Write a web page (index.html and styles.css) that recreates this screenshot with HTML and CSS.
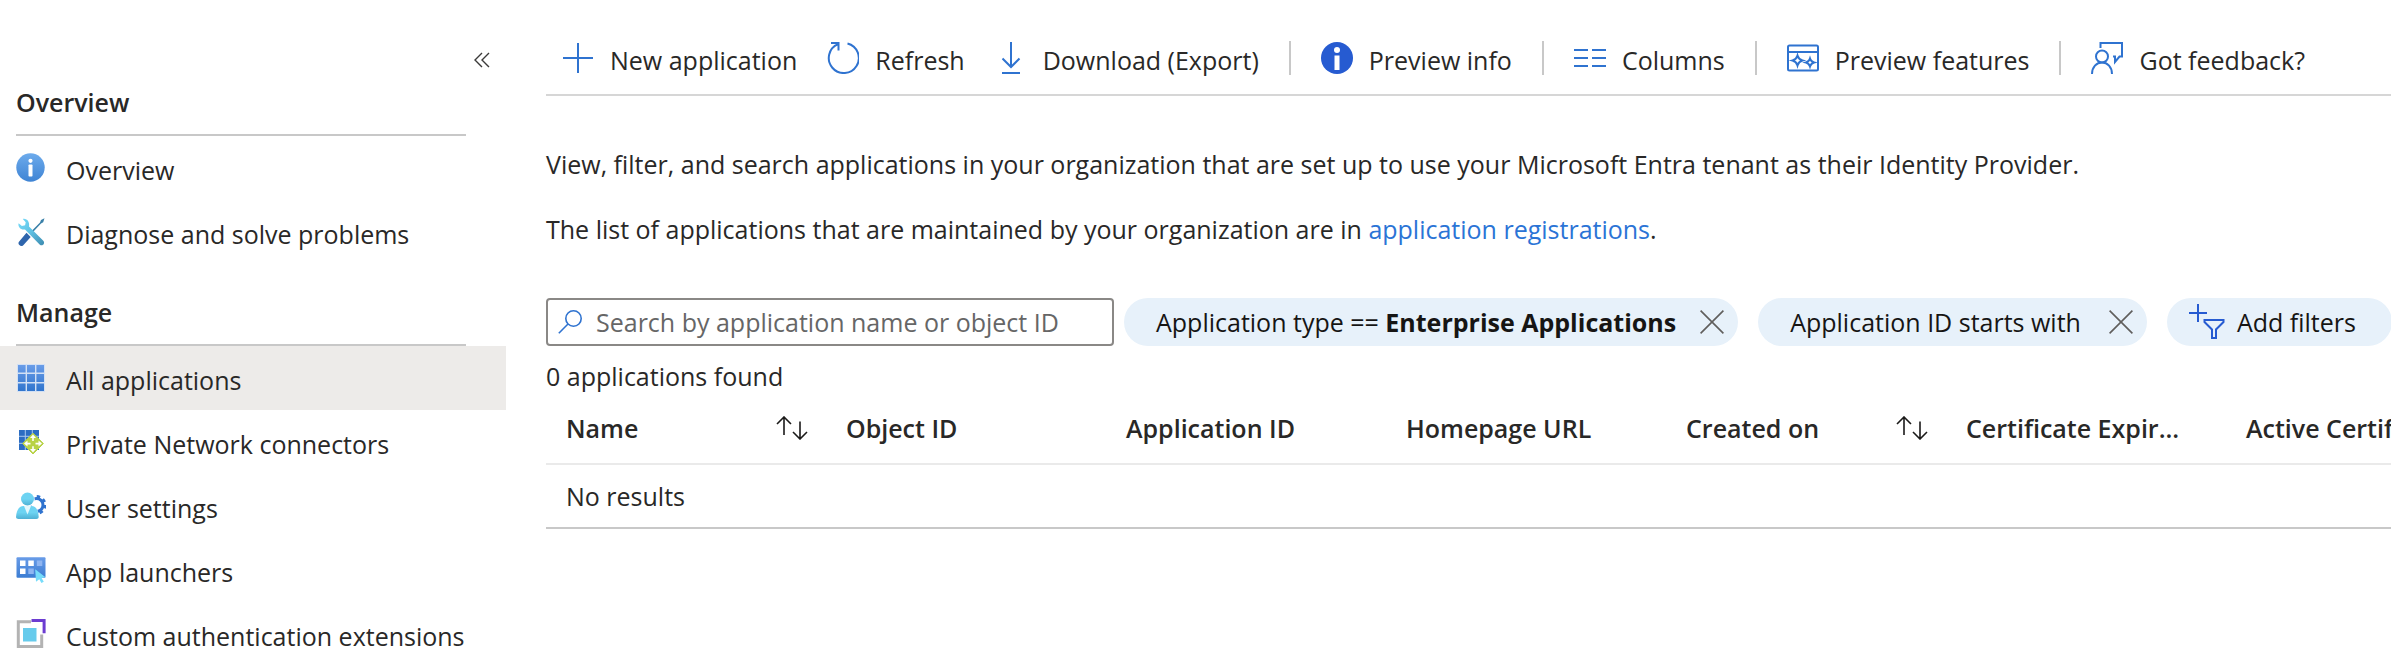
FILE: index.html
```html
<!DOCTYPE html>
<html lang="en">

<head>
    <meta charset="UTF-8">
    <meta name="viewport" content="width=device-width, initial-scale=1.0">
    <title>Enterprise applications | All applications</title>
    <link rel="stylesheet" href="styles.css">
</head>

<body>

    <div class="app">
        <!-- left menu -->
        <nav class="sidebar">
            <div class="sidebar-top">
                <button class="collapse" type="button" aria-label="Collapse menu">
                    <svg width="16" height="16" viewBox="0 0 16 16" fill="none" stroke="#3b3a39" stroke-width="1.4">
                        <path d="M8 1L1 8l7 7M15 1L8 8l7 7" />
                    </svg>
                </button>
            </div>

            <h2 class="group">Overview</h2>
            <ul class="menu">
                <li>
                    <a href="#">
                        <svg width="30" height="30" viewBox="0 0 30 30">
                            <defs>
                                <linearGradient id="g-blue" x1="0" y1="0" x2="0" y2="1">
                                    <stop offset="0" stop-color="#6dabec" />
                                    <stop offset="1" stop-color="#3f84d4" />
                                </linearGradient>
                            </defs>
                            <circle cx="14.5" cy="14.5" r="14.2" fill="url(#g-blue)" />
                            <circle cx="14.5" cy="7.8" r="2.1" fill="#fff" />
                            <rect x="12.5" y="11.4" width="4" height="12.2" rx=".8" fill="#fff" />
                        </svg>
                        <span>Overview</span>
                    </a>
                </li>
                <li>
                    <a href="#">
                        <svg width="30" height="30" viewBox="0 0 30 30">
                            <defs>
                                <linearGradient id="g-wrench" x1="0" y1="0" x2="1" y2="1">
                                    <stop offset="0" stop-color="#76dcfa" />
                                    <stop offset=".5" stop-color="#5fc0e2" />
                                    <stop offset="1" stop-color="#3d8bb0" />
                                </linearGradient>
                            </defs>
                            <path d="M28.5 1.2L25 3l-1 2.4L15.6 14l1.2 1.2L25 6.5l2.2-1.3z" fill="#3a80a8" />
                            <path d="M10.5 15.8l4.2 4.2-7.4 8.2c-1.6 1.4-3 .9-3.9-.2-1.1-1.1-1.4-2.5 0-3.8z" fill="#2e65ac" />
                            <path d="M2.6 6.2C1.6 9.5 4.6 13.3 9 12.5L23.6 27.4c2.8 2.4 6-.9 3.7-3.7L13 9.4C14 5 10.8 1 6.8 1.9l2.9 3.3-.6 3-3.2.7z" fill="url(#g-wrench)" />
                        </svg>
                        <span>Diagnose and solve problems</span>
                    </a>
                </li>
            </ul>

            <h2 class="group">Manage</h2>
            <ul class="menu">
                <li>
                    <a class="active" href="#" aria-current="page">
                        <svg width="30" height="30" viewBox="0 0 30 30">
                            <defs>
                                <linearGradient id="g-grid" gradientUnits="userSpaceOnUse" x1="0" y1="1" x2="0" y2="29">
                                    <stop offset="0" stop-color="#6b9de9" />
                                    <stop offset="1" stop-color="#2e73cc" />
                                </linearGradient>
                            </defs>
                            <rect x="1" y="1" width="28" height="28" fill="#d2e0f4" />
                            <path d="M2 2h7.6v7.6H2zM11 2h8v7.6h-8zM20.4 2H28v7.6h-7.6zM2 11h7.6v8H2zM11 11h8v8h-8zM20.4 11H28v8h-7.6zM2 20.4h7.6V28H2zM11 20.4h8V28h-8zM20.4 20.4H28V28h-7.6z" fill="url(#g-grid)" />
                        </svg>
                        <span>All applications</span>
                    </a>
                </li>
                <li>
                    <a href="#">
                        <svg width="30" height="30" viewBox="0 0 30 30">
                            <path d="M3 3h20v20H3z" fill="#2c6dc2" />
                            <path d="M9.3 3v20M16.3 3v20M3 9.3h20M3 16.3h20" stroke="#a9c8ee" stroke-width="1" />
                            <path d="M17 6.2L27.4 16.6 17 27 6.6 16.6z" fill="#b8d247" stroke="#b8d247" stroke-width="1" stroke-linejoin="round" />
                            <path d="M17 7.6l3 3.5h-2.2V14h-1.6v-2.9H14zM17 25.6l3-3.5h-2.2v-2.9h-1.6v2.9H14zM8 16.6l3.5-3v2.2h3v1.6h-3v2.2zM26 16.6l-3.5-3v2.2h-3v1.6h3v2.2z" fill="#fff" />
                        </svg>
                        <span>Private Network connectors</span>
                    </a>
                </li>
                <li>
                    <a href="#">
                        <svg width="30" height="30" viewBox="0 0 30 30">
                            <defs>
                                <linearGradient id="g-user" x1="0" y1="0" x2="0" y2="1">
                                    <stop offset=".5" stop-color="#6dd3f2" />
                                    <stop offset="1" stop-color="#4fb0d4" />
                                </linearGradient>
                            </defs>
                            <circle cx="20.5" cy="14" r="6.5" fill="none" stroke="#2f73cf" stroke-width="3" />
                            <circle cx="20.5" cy="14" r="8.6" fill="none" stroke="#2f73cf" stroke-width="2.8" stroke-dasharray="3.4 3.354" />
                            <circle cx="11.5" cy="8.5" r="7.2" fill="#fff" />
                            <path d="M0 28c0-8 3-13.5 8-13.5h7c5 0 8 5.5 8 13.5z" fill="#fff" />
                            <path d="M2.5 28C1 28 0 27.3 0 26c.4-6.5 3-11 7.5-11h8c4.5 0 7 4.5 7.2 11 0 1.3-.9 2-2.4 2z" fill="url(#g-user)" />
                            <path d="M8 15h7l-3.5 8.5z" fill="#e4f7fd" />
                            <circle cx="11.5" cy="8" r="6.5" fill="url(#g-user)" />
                        </svg>
                        <span>User settings</span>
                    </a>
                </li>
                <li>
                    <a href="#">
                        <svg width="30" height="30" viewBox="0 0 30 30">
                            <rect x=".5" y="2.2" width="29" height="20.5" rx="1" fill="url(#g-grid)" />
                            <path d="M4 5.5h5.5V11H4zM12.3 5.5h5.5V11h-5.5zM4 13.5h5.5V19H4z" fill="#fff" />
                            <path d="M20.8 5.5h5.5V11h-5.5zM12.3 13.5h5.5V19h-5.5z" fill="#8fb5f1" />
                            <path d="M19.2 14.2l10.3 8-3.9.8 2.2 3.7-2.4 1.2-2.1-3.7-3.3 2.6z" fill="#76dcfa" />
                        </svg>
                        <span>App launchers</span>
                    </a>
                </li>
                <li>
                    <a href="#">
                        <svg width="30" height="30" viewBox="0 0 30 30">
                            <path d="M15 2.8H2.3v24.8h23.4V15.5" fill="none" stroke="#b3b3b3" stroke-width="3" />
                            <path d="M15.5 1.4h12.6v12.8" fill="none" stroke="#6c3cd1" stroke-width="3" />
                            <rect x="7" y="9" width="13.5" height="13.5" fill="#66cbec" />
                        </svg>
                        <span>Custom authentication extensions</span>
                    </a>
                </li>
            </ul>
        </nav>

        <main class="content">
            <!-- command bar -->
            <div class="toolbar">
                <button type="button">
                    <svg width="32" height="32" viewBox="0 0 32 32" fill="none" stroke="#2f73d0" stroke-width="2">
                        <path d="M16 1v30M1 16h30" />
                    </svg>
                    <span>New application</span>
                </button>
                <button type="button">
                    <svg width="32" height="32" viewBox="0 0 32 32" fill="none" stroke="#2f73d0" stroke-width="2">
                        <path d="M20.5 1.5A15 15 0 1 1 11 2.2M4 1h7.5v7.5" />
                    </svg>
                    <span>Refresh</span>
                </button>
                <button type="button">
                    <svg width="32" height="32" viewBox="0 0 32 32" fill="none" stroke="#2f73d0" stroke-width="2">
                        <path d="M16 0v25M7.5 16.5L16 25l8.5-8.5M7 31h18" />
                    </svg>
                    <span>Download (Export)</span>
                </button>
                <span class="sep"></span>
                <button type="button">
                    <svg width="32" height="32" viewBox="0 0 32 32">
                        <circle cx="16" cy="16" r="16" fill="#265bd1" />
                        <circle cx="16" cy="8" r="3" fill="#fff" />
                        <rect x="13.5" y="13.5" width="5" height="14.5" fill="#fff" />
                    </svg>
                    <span>Preview info</span>
                </button>
                <span class="sep"></span>
                <button type="button">
                    <svg width="32" height="32" viewBox="0 0 32 32" fill="none" stroke="#2f73d0" stroke-width="2">
                        <path d="M0 8h14M18 8h14M0 16h14M18 16h14M0 24h14M18 24h14" />
                    </svg>
                    <span>Columns</span>
                </button>
                <span class="sep"></span>
                <button type="button">
                    <svg width="32" height="32" viewBox="0 0 32 32" fill="none" stroke="#2f73d0" stroke-width="2">
                        <rect x="1" y="3.5" width="30" height="25" rx="1.5" />
                        <path d="M1 10h30" />
                        <path d="M10.5 13.5q1.2 4 5 5-3.8 1-5 5-1.2-4-5-5 3.8-1 5-5zM23 16.5q1 3.2 4 4-3 .8-4 4-1-3.2-4-4 3-.8 4-4z" />
                    </svg>
                    <span>Preview features</span>
                </button>
                <span class="sep"></span>
                <button type="button">
                    <svg width="32" height="32" viewBox="0 0 32 32" fill="none" stroke="#2f73d0" stroke-width="2">
                        <path d="M9.5 6V1H31v13.5h-2.5L24 20v-5.5h-2" />
                        <circle cx="11" cy="14.5" r="6" />
                        <path d="M1 32c0-7 4.5-11.5 10-11.5S21 25 21 32" />
                    </svg>
                    <span>Got feedback?</span>
                </button>
            </div>

            <p class="intro">View, filter, and search applications in your organization that are set up to use your Microsoft Entra tenant as their Identity Provider.</p>
            <p class="intro">The list of applications that are maintained by your organization are in <a href="#">application registrations</a>.</p>

            <!-- search and filters -->
            <div class="filters">
                <label class="search">
                    <svg width="24" height="24" viewBox="0 0 24 24" fill="none" stroke="#2f73d0" stroke-width="1.6">
                        <circle cx="15.5" cy="8.5" r="7.7" />
                        <path d="M10 14L.8 23.2" />
                    </svg>
                    <input type="text" aria-label="Search" placeholder="Search by application name or object ID">
                </label>
                <div class="pill">
                    <span>Application type == <b>Enterprise Applications</b></span>
                    <button type="button" aria-label="Remove application type filter">
                        <svg width="24" height="24" viewBox="0 0 24 24" fill="none" stroke="#605e5c" stroke-width="1.6">
                            <path d="M.6.6l22.8 22.8M23.4.6L.6 23.4" />
                        </svg>
                    </button>
                </div>
                <div class="pill pill-wide">
                    <span>Application ID starts with</span>
                    <button type="button" aria-label="Remove application ID filter">
                        <svg width="24" height="24" viewBox="0 0 24 24" fill="none" stroke="#605e5c" stroke-width="1.6">
                            <path d="M.6.6l22.8 22.8M23.4.6L.6 23.4" />
                        </svg>
                    </button>
                </div>
                <button class="pill add" type="button">
                    <svg width="36" height="36" viewBox="0 0 36 36" fill="none" stroke="#265bd1" stroke-width="2">
                        <path d="M9 0v18M0 9h18M15.5 16h19v2l-7.5 7.5V34h-4v-8.5L15.5 18z" />
                    </svg>
                    <span>Add filters</span>
                </button>
            </div>

            <p class="count">0 applications found</p>

            <div class="table-wrap">
                <table>
                    <thead>
                        <tr>
                            <th>
                                <div class="th">Name
                                    <svg width="32" height="24" viewBox="0 0 32 24" fill="none" stroke="#1b1a19" stroke-width="1.6">
                                        <path d="M8 19V1M1 8l7-7 7 7M24 5.5V23M17 16l7 7 7-7" />
                                    </svg>
                                </div>
                            </th>
                            <th>Object ID</th>
                            <th>Application ID</th>
                            <th>Homepage URL</th>
                            <th>
                                <div class="th">Created on
                                    <svg width="32" height="24" viewBox="0 0 32 24" fill="none" stroke="#1b1a19" stroke-width="1.6">
                                        <path d="M8 19V1M1 8l7-7 7 7M24 5.5V23M17 16l7 7 7-7" />
                                    </svg>
                                </div>
                            </th>
                            <th>Certificate Expir...</th>
                            <th>Active Certificate...</th>
                        </tr>
                    </thead>
                    <tbody>
                        <tr>
                            <td colspan="7">No results</td>
                        </tr>
                    </tbody>
                </table>
            </div>
        </main>
    </div>

</body>

</html>
```
FILE: styles.css
```css
* {
    box-sizing: border-box;
    padding: 0;
    margin: 0;
}

body {
    font: 25px/32px "Open Sans", "Noto Sans", sans-serif;
    color: #292827;
    background: #fff;
}

button {
    font: inherit;
    color: inherit;
    background: none;
    border: 0;
    cursor: pointer;
}

a {
    color: #2b74d6;
    text-decoration: none;
}

svg {
    display: block;
    flex: none;
}

.app {
    display: flex;
    min-height: 100vh;
}

/* sidebar */
.sidebar {
    flex: none;
    width: 506px;
}

.sidebar-top {
    display: flex;
    justify-content: flex-end;
    height: 54px;
    padding: 52px 16px 0 0;
}

.collapse {
    width: 16px;
    height: 16px;
}

.group {
    height: 82px;
    margin: 0 40px 0 16px;
    padding-top: 32px;
    border-bottom: 2px solid #c8c8c8;
    font-size: 25px;
    font-weight: 600;
}

.menu {
    list-style: none;
}

.menu a {
    display: flex;
    align-items: center;
    gap: 20px;
    height: 64px;
    padding-left: 16px;
    color: #292827;
}

.menu span,
.toolbar button span {
    padding-top: 3px;
}

.menu .active {
    background: #edebe9;
}

/* command bar */
.content {
    flex: 1;
    min-width: 0;
    padding-left: 40px;
}

.toolbar {
    display: flex;
    align-items: center;
    gap: 30px;
    height: 96px;
    padding: 22px 0 0 16px;
    border-bottom: 2px solid #d6d6d6;
    white-space: nowrap;
}

.toolbar button {
    display: flex;
    align-items: center;
    gap: 16px;
}

.sep {
    width: 2px;
    height: 34px;
    background: #c8c8c8;
}

.intro {
    margin-top: 33px;
}

.toolbar + .intro {
    margin-top: 52px;
}

/* search and filters */
.filters {
    display: flex;
    height: 48px;
    margin-top: 53px;
    white-space: nowrap;
}

.search {
    display: flex;
    flex: none;
    align-items: center;
    gap: 14px;
    width: 568px;
    margin-right: 10px;
    padding: 0 10px;
    border: 2px solid #8a8886;
    border-radius: 4px;
}

.search input {
    flex: 1;
    min-width: 0;
    font: inherit;
    border: 0;
    outline: 0;
}

.search input::placeholder {
    color: #666;
    opacity: 1;
}

.pill {
    display: flex;
    flex: none;
    align-items: center;
    gap: 24px;
    margin-right: 20px;
    padding: 0 14px 0 32px;
    border-radius: 24px;
    background: #e7f1fa;
    color: #161514;
}

.pill-wide {
    gap: 28px;
}

.add {
    gap: 12px;
    margin-right: 0;
    padding: 0 36px 0 22px;
}

.count {
    margin-top: 14px;
}

/* results */
.table-wrap {
    overflow: hidden;
    margin-top: 3px;
}

table {
    width: 1960px;
    table-layout: fixed;
    border-collapse: collapse;
}

th,
td {
    height: 64px;
    padding: 0 18px 0 20px;
    text-align: left;
    white-space: nowrap;
}

th {
    height: 69px;
    padding-bottom: 2px;
    border-bottom: 2px solid #eaeaea;
    font-weight: 600;
}

td {
    border-bottom: 2px solid #c8c8c8;
}

.th {
    display: flex;
    align-items: center;
    justify-content: space-between;
}
```
